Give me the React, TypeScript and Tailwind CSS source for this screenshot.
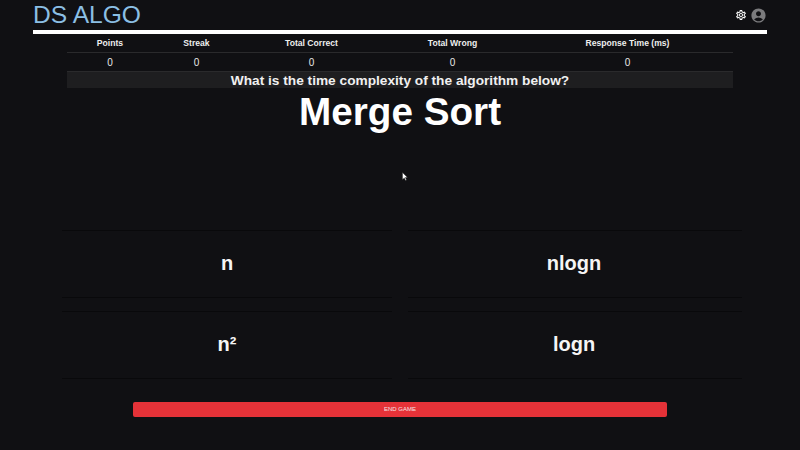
import React from 'react';
import { MdAccountCircle, MdOutlineSettings } from 'react-icons/md';

const stats = [
  { label: 'Points', width: 'w-[86px]' },
  { label: 'Streak', width: 'w-[87px]' },
  { label: 'Total Correct', width: 'w-[143px]' },
  { label: 'Total Wrong', width: 'w-[139px]' },
  { label: 'Response Time (ms)', width: 'flex-1' },
];

const answers = ['n', 'nlogn', 'n²', 'logn'];

export default function App() {
  return (
    <div className="relative w-[800px] h-[450px] overflow-hidden bg-[#101013] text-white font-['Liberation_Sans',Arial,sans-serif]">
      <div className="px-[33px]">
        <header className="h-[30px] flex items-center justify-between">
          <h1 className="text-[24.6px] leading-[30px] font-normal text-[#8bbfe4]">DS ALGO</h1>
          <div className="flex items-center gap-[3px]">
            <MdOutlineSettings className="text-white w-[12px] h-[12px]" />
            <MdAccountCircle className="text-[#7b7b7d] w-[17px] h-[17px]" />
          </div>
        </header>
        <div className="h-[4px] bg-white" />
      </div>

      <div className="mx-[67px] w-[666px]">
        <div className="flex h-[19px] items-center border-b border-[#2a2a2c] text-[8.6px] font-bold text-[#eeeeee]">
          {stats.map((s) => (
            <div key={s.label} className={`${s.width} text-center`}>{s.label}</div>
          ))}
        </div>
        <div className="flex h-[18px] items-center text-[10px] text-[#e8e8e8]">
          {stats.map((s) => (
            <div key={s.label} className={`${s.width} text-center`}>0</div>
          ))}
        </div>
        <div className="h-[17px] bg-[#1e1e20] border-t border-[#2a2a2c] text-center text-[13.7px] leading-[17px] font-bold text-[#f0f0f0]">
          What is the time complexity of the algorithm below?
        </div>
      </div>

      <h2 className="mt-[1px] text-center text-[38.7px] leading-[46px] font-bold">Merge Sort</h2>

      <div className="mt-[95px] ml-[62px] grid grid-cols-[330px_334px] gap-x-[16px] gap-y-[13px]">
        {answers.map((a) => (
          <div
            key={a}
            className="h-[68px] pb-[2px] even:pr-[2px] flex items-center justify-center border-y border-[#09090b] text-[20px] font-bold text-[#f5f5f5]"
          >
            {a}
          </div>
        ))}
      </div>

      <div className="mt-[23px] mx-[133px] w-[534px] h-[15px] rounded-[2px] bg-[#e53238] flex items-center justify-center text-[6px] text-[#f4e6e6]">
        END GAME
      </div>

      {/* mouse pointer caught in the capture */}
      <svg className="absolute left-[402px] top-[172px]" width="6" height="9" viewBox="0 0 6 9">
        <path d="M0.500 0.500v7l1.800-1.600 1.200 2.600 1-.5-1.200-2.500h2.200z" fill="#fff" stroke="#222" strokeWidth="0.4" />
      </svg>
    </div>
  );
}
